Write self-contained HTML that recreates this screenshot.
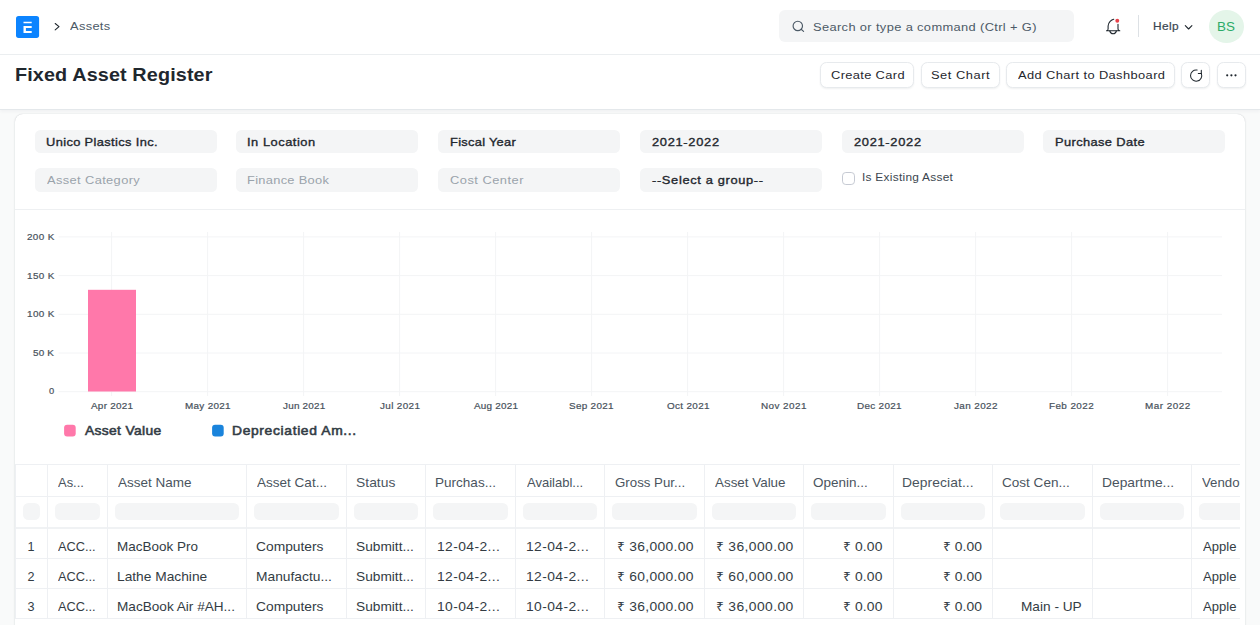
<!DOCTYPE html>
<html lang="en">
<head>
<meta charset="utf-8">
<title>Fixed Asset Register</title>
<style>
*{box-sizing:border-box;margin:0;padding:0}
html,body{width:1260px;height:625px;overflow:hidden}
body{background:#f9fafa;font-family:"Liberation Sans", sans-serif;color:#1f272e;position:relative}
.b{position:absolute;display:block}
.t{position:absolute;white-space:pre;line-height:1;display:block;transform-origin:0 0}
#nav{left:0;top:0;width:1260px;height:54.5px;background:#fff;border-bottom:1px solid #ebeef0}
#head{left:0;top:54.5px;width:1260px;height:55.5px;background:#fff;border-bottom:1px solid #e4e8eb;box-shadow:0 2px 3px rgba(25,39,52,.035)}
#search{left:779px;top:10.2px;width:295px;height:32.2px;background:#f4f5f6;border-radius:6px}
#avatar{left:1209px;top:10px;width:35px;height:32.6px;border-radius:50%;background:#e4f5e9}
#vdiv{left:1138px;top:15px;width:1px;height:22px;background:#dde1e5}
.btn{top:62.2px;height:26.2px;background:#fff;border:1px solid #e7eaed;border-radius:6.5px;box-shadow:0 1px 2px rgba(25,39,52,.07)}
#card{left:15px;top:114px;width:1230px;height:540px;background:#fff;border-radius:8px;box-shadow:0 0 1px rgba(25,39,52,.25),0 1px 3px rgba(25,39,52,.08)}
#fsep{left:15px;top:209px;width:1230px;height:1px;background:#eef0f2}
</style>
</head>
<body>
<nav>
<div id="nav" class="b"></div>
<div id="search" class="b"></div>
<div id="vdiv" class="b"></div>
<div id="avatar" class="b"></div>
<svg class="b" style="left:0;top:0" width="1260" height="55" viewBox="0 0 1260 55" fill="none" stroke-linecap="round" stroke-linejoin="round">
<rect x="16" y="16.100" width="23.100" height="21.800" rx="2.600" fill="#0c84ff"/>
<path d="M23.500 21.800h8.200v1.500h-8.200z M23.500 26h8.200v1.900h-5.800v3.100h5.800v1.900h-8.200z" fill="#fff"/>
<path d="M55.2 23.5L59 26.7 55.2 29.9" stroke="#1f272e" stroke-width="1.1"/>
<circle cx="797.8" cy="25.9" r="4.7" stroke="#4c5a67" stroke-width="1.15"/>
<path d="M801.4 29.5l2.2 1.9" stroke="#4c5a67" stroke-width="1.15"/>
<path d="M1113.7 19.2C1111.4 19.7 1108.3 22.3 1108.1 26V29C1108 30 1107.3 30.7 1106.5 30.7H1119.8C1118.8 30.7 1118 30 1118 29V24.3" stroke="#1f272e" stroke-width="1.1"/>
<path d="M1109.8 31C1110.2 32.6 1111.5 33.7 1113.1 33.7S1116 32.6 1116.4 31" stroke="#1f272e" stroke-width="1.1"/>
<circle cx="1117.3" cy="20.8" r="1.95" fill="#e8424a"/>
<path d="M1185.3 25.7L1188.6 29 1191.9 25.7" stroke="#1f272e" stroke-width="1.1"/>
</svg>
<span class="t" style="left:69.8px;top:19.5px;font-size:11.7px;color:#4c5a67;letter-spacing:0.29px;transform:scaleX(1.100);">Assets</span>
<span class="t" style="left:813.1px;top:20.6px;font-size:11.7px;color:#4c5a67;letter-spacing:0.33px;transform:scaleX(1.100);">Search or type a command (Ctrl + G)</span>
<span class="t" style="left:1152.6px;top:20.6px;font-size:10.8px;color:#3b4650;-webkit-text-stroke:0.2px #3b4650;letter-spacing:0.38px;transform:scaleX(1.100);">Help</span>
<span class="t" style="left:1217.1px;top:20.9px;font-size:12.6px;color:#2cab68;transform:scaleX(1.063);">BS</span>
</nav>
<header>
<div id="head" class="b"></div>
<div class="b btn" style="left:820.4px;width:93.6px"></div>
<div class="b btn" style="left:921px;width:79px"></div>
<div class="b btn" style="left:1006.4px;width:168.3px"></div>
<div class="b btn" style="left:1181.4px;width:28.8px"></div>
<div class="b btn" style="left:1217.4px;width:28.2px"></div>
<svg class="b" style="left:0;top:55px" width="1260" height="55" viewBox="0 55 1260 55" fill="none" stroke-linecap="round" stroke-linejoin="round">
<path d="M1197.1 70.05A5.6 5.6 0 1 0 1201.3 73.4" stroke="#1f272e" stroke-width="1.05"/>
<path d="M1201.3 70.3V73.4H1198.3" stroke="#1f272e" stroke-width="1.05"/>
<circle cx="1227.2" cy="75.3" r="1.1" fill="#1f272e"/><circle cx="1231.4" cy="75.3" r="1.1" fill="#1f272e"/><circle cx="1235.5" cy="75.3" r="1.1" fill="#1f272e"/>
</svg>
<span class="t" style="left:14.7px;top:65.6px;font-size:18px;color:#1f272e;font-weight:bold;letter-spacing:0.11px;transform:scaleX(1.100);">Fixed Asset Register</span>
<span class="t" style="left:830.5px;top:68.6px;font-size:11.7px;color:#1f272e;letter-spacing:0.32px;transform:scaleX(1.100);">Create Card</span>
<span class="t" style="left:931.1px;top:68.6px;font-size:11.7px;color:#1f272e;letter-spacing:0.49px;transform:scaleX(1.100);">Set Chart</span>
<span class="t" style="left:1017.5px;top:68.6px;font-size:11.7px;color:#1f272e;letter-spacing:0.36px;transform:scaleX(1.100);">Add Chart to Dashboard</span>
</header>
<main>
<div id="card" class="b"></div>
<section id="filters">
<div class="b" style="left:34.6px;top:130px;width:182px;height:23.4px;background:#f4f5f6;border-radius:5.5px;"></div>
<div class="b" style="left:34.6px;top:168.2px;width:182px;height:23.4px;background:#f4f5f6;border-radius:5.5px;"></div>
<div class="b" style="left:236.3px;top:130px;width:182px;height:23.4px;background:#f4f5f6;border-radius:5.5px;"></div>
<div class="b" style="left:236.3px;top:168.2px;width:182px;height:23.4px;background:#f4f5f6;border-radius:5.5px;"></div>
<div class="b" style="left:438.1px;top:130px;width:182px;height:23.4px;background:#f4f5f6;border-radius:5.5px;"></div>
<div class="b" style="left:438.1px;top:168.2px;width:182px;height:23.4px;background:#f4f5f6;border-radius:5.5px;"></div>
<div class="b" style="left:639.9px;top:130px;width:182px;height:23.4px;background:#f4f5f6;border-radius:5.5px;"></div>
<div class="b" style="left:639.9px;top:168.2px;width:182px;height:23.4px;background:#f4f5f6;border-radius:5.5px;"></div>
<div class="b" style="left:841.6px;top:130px;width:182px;height:23.4px;background:#f4f5f6;border-radius:5.5px;"></div>
<div class="b" style="left:1043.3px;top:130px;width:182px;height:23.4px;background:#f4f5f6;border-radius:5.5px;"></div>
<div class="b" style="left:841.8px;top:171.5px;width:13.3px;height:13px;background:#fff;border:1.3px solid #c6cad3;border-radius:3.8px;"></div>
<span class="t" style="left:46.0px;top:135.7px;font-size:11.7px;color:#1f272e;-webkit-text-stroke:0.35px #1f272e;letter-spacing:0.33px;transform:scaleX(1.100);">Unico Plastics Inc.</span>
<span class="t" style="left:247.1px;top:135.7px;font-size:11.7px;color:#1f272e;-webkit-text-stroke:0.35px #1f272e;letter-spacing:0.48px;transform:scaleX(1.100);">In Location</span>
<span class="t" style="left:449.8px;top:135.7px;font-size:11.7px;color:#1f272e;-webkit-text-stroke:0.35px #1f272e;letter-spacing:0.26px;transform:scaleX(1.100);">Fiscal Year</span>
<span class="t" style="left:652.0px;top:135.7px;font-size:11.7px;color:#1f272e;-webkit-text-stroke:0.35px #1f272e;letter-spacing:0.63px;transform:scaleX(1.100);">2021-2022</span>
<span class="t" style="left:853.5px;top:135.7px;font-size:11.7px;color:#1f272e;-webkit-text-stroke:0.35px #1f272e;letter-spacing:0.63px;transform:scaleX(1.100);">2021-2022</span>
<span class="t" style="left:1054.5px;top:135.7px;font-size:11.7px;color:#1f272e;-webkit-text-stroke:0.35px #1f272e;letter-spacing:0.34px;transform:scaleX(1.100);">Purchase Date</span>
<span class="t" style="left:46.8px;top:174.1px;font-size:11.7px;color:#9aa3ab;letter-spacing:0.34px;transform:scaleX(1.100);">Asset Category</span>
<span class="t" style="left:247.1px;top:174.1px;font-size:11.7px;color:#9aa3ab;letter-spacing:0.27px;transform:scaleX(1.100);">Finance Book</span>
<span class="t" style="left:449.8px;top:174.1px;font-size:11.7px;color:#9aa3ab;letter-spacing:0.44px;transform:scaleX(1.100);">Cost Center</span>
<span class="t" style="left:652.0px;top:174.1px;font-size:11.7px;color:#1f272e;-webkit-text-stroke:0.35px #1f272e;letter-spacing:0.59px;transform:scaleX(1.100);">--Select a group--</span>
<span class="t" style="left:861.6px;top:172.2px;font-size:10.8px;color:#3b4650;letter-spacing:0.25px;transform:scaleX(1.100);">Is Existing Asset</span>
<div id="fsep" class="b"></div>
</section>
<section id="chart">
<svg class="b" style="left:0;top:0" width="1260" height="625" viewBox="0 0 1260 625"><line x1="111.6" y1="232" x2="111.6" y2="396" stroke="#f3f4f6" stroke-width="1"/><line x1="207.6" y1="232" x2="207.6" y2="396" stroke="#f3f4f6" stroke-width="1"/><line x1="303.6" y1="232" x2="303.6" y2="396" stroke="#f3f4f6" stroke-width="1"/><line x1="399.6" y1="232" x2="399.6" y2="396" stroke="#f3f4f6" stroke-width="1"/><line x1="495.6" y1="232" x2="495.6" y2="396" stroke="#f3f4f6" stroke-width="1"/><line x1="591.6" y1="232" x2="591.6" y2="396" stroke="#f3f4f6" stroke-width="1"/><line x1="687.6" y1="232" x2="687.6" y2="396" stroke="#f3f4f6" stroke-width="1"/><line x1="783.6" y1="232" x2="783.6" y2="396" stroke="#f3f4f6" stroke-width="1"/><line x1="879.6" y1="232" x2="879.6" y2="396" stroke="#f3f4f6" stroke-width="1"/><line x1="975.6" y1="232" x2="975.6" y2="396" stroke="#f3f4f6" stroke-width="1"/><line x1="1071.6" y1="232" x2="1071.6" y2="396" stroke="#f3f4f6" stroke-width="1"/><line x1="1167.6" y1="232" x2="1167.6" y2="396" stroke="#f3f4f6" stroke-width="1"/><line x1="58.5" y1="236.9" x2="1222" y2="236.9" stroke="#f3f4f6" stroke-width="1"/><line x1="58.5" y1="275.6" x2="1222" y2="275.6" stroke="#f3f4f6" stroke-width="1"/><line x1="58.5" y1="314.3" x2="1222" y2="314.3" stroke="#f3f4f6" stroke-width="1"/><line x1="58.5" y1="353.0" x2="1222" y2="353.0" stroke="#f3f4f6" stroke-width="1"/><line x1="58.5" y1="391.7" x2="1222" y2="391.7" stroke="#f3f4f6" stroke-width="1"/><rect x="88" y="289.800" width="48" height="101.700" fill="#ff78aa"/><rect x="64.1" y="424.8" width="11.6" height="11.6" rx="3" fill="#ff78aa"/><rect x="212.1" y="424.8" width="11.6" height="11.6" rx="3" fill="#1a84dc"/></svg>
<span class="t" style="left:26.5px;top:232.7px;font-size:9px;color:#48525c;-webkit-text-stroke:0.2px #48525c;letter-spacing:0.32px;transform:scaleX(1.100);">200 K</span>
<span class="t" style="left:26.8px;top:272.1px;font-size:9px;color:#48525c;-webkit-text-stroke:0.2px #48525c;letter-spacing:0.35px;transform:scaleX(1.100);">150 K</span>
<span class="t" style="left:26.8px;top:310.2px;font-size:9px;color:#48525c;-webkit-text-stroke:0.2px #48525c;letter-spacing:0.35px;transform:scaleX(1.100);">100 K</span>
<span class="t" style="left:32.9px;top:348.9px;font-size:9px;color:#48525c;-webkit-text-stroke:0.2px #48525c;letter-spacing:0.16px;transform:scaleX(1.100);">50 K</span>
<span class="t" style="left:48.6px;top:387.1px;font-size:9px;color:#48525c;-webkit-text-stroke:0.2px #48525c;transform:scaleX(1.037);">0</span>
<span class="t" style="left:90.7px;top:402.2px;font-size:9px;color:#48525c;-webkit-text-stroke:0.2px #48525c;letter-spacing:0.24px;transform:scaleX(1.100);">Apr 2021</span>
<span class="t" style="left:185.1px;top:402.2px;font-size:9px;color:#48525c;-webkit-text-stroke:0.2px #48525c;letter-spacing:0.27px;transform:scaleX(1.100);">May 2021</span>
<span class="t" style="left:282.6px;top:402.2px;font-size:9px;color:#48525c;-webkit-text-stroke:0.2px #48525c;letter-spacing:0.20px;transform:scaleX(1.100);">Jun 2021</span>
<span class="t" style="left:379.7px;top:402.2px;font-size:9px;color:#48525c;-webkit-text-stroke:0.2px #48525c;letter-spacing:0.33px;transform:scaleX(1.100);">Jul 2021</span>
<span class="t" style="left:473.7px;top:402.2px;font-size:9px;color:#48525c;-webkit-text-stroke:0.2px #48525c;letter-spacing:0.21px;transform:scaleX(1.100);">Aug 2021</span>
<span class="t" style="left:569.2px;top:402.2px;font-size:9px;color:#48525c;-webkit-text-stroke:0.2px #48525c;letter-spacing:0.28px;transform:scaleX(1.100);">Sep 2021</span>
<span class="t" style="left:666.5px;top:402.2px;font-size:9px;color:#48525c;-webkit-text-stroke:0.2px #48525c;letter-spacing:0.30px;transform:scaleX(1.100);">Oct 2021</span>
<span class="t" style="left:760.6px;top:402.2px;font-size:9px;color:#48525c;-webkit-text-stroke:0.2px #48525c;letter-spacing:0.39px;transform:scaleX(1.100);">Nov 2021</span>
<span class="t" style="left:857.2px;top:402.2px;font-size:9px;color:#48525c;-webkit-text-stroke:0.2px #48525c;letter-spacing:0.28px;transform:scaleX(1.100);">Dec 2021</span>
<span class="t" style="left:954.0px;top:402.2px;font-size:9px;color:#48525c;-webkit-text-stroke:0.2px #48525c;letter-spacing:0.36px;transform:scaleX(1.100);">Jan 2022</span>
<span class="t" style="left:1048.8px;top:402.2px;font-size:9px;color:#48525c;-webkit-text-stroke:0.2px #48525c;letter-spacing:0.37px;transform:scaleX(1.100);">Feb 2022</span>
<span class="t" style="left:1144.6px;top:402.2px;font-size:9px;color:#48525c;-webkit-text-stroke:0.2px #48525c;letter-spacing:0.46px;transform:scaleX(1.100);">Mar 2022</span>
<span class="t" style="left:85.2px;top:424.8px;font-size:12.6px;color:#333c45;-webkit-text-stroke:0.55px #333c45;letter-spacing:0.30px;transform:scaleX(1.100);">Asset Value</span>
<span class="t" style="left:231.7px;top:424.8px;font-size:12.6px;color:#333c45;-webkit-text-stroke:0.55px #333c45;letter-spacing:0.59px;transform:scaleX(1.100);">Depreciatied Am...</span>
</section>
<section id="datatable">
<div class="b" style="left:15px;top:464px;width:1225px;height:1px;background:#eef0f3"></div>
<div class="b" style="left:15px;top:496px;width:1225px;height:1px;background:#eef0f3"></div>
<div class="b" style="left:15px;top:527px;width:1225px;height:2px;background:#f0f2f4"></div>
<div class="b" style="left:15px;top:558px;width:1225px;height:1px;background:#eef0f3"></div>
<div class="b" style="left:15px;top:588px;width:1225px;height:1px;background:#eef0f3"></div>
<div class="b" style="left:15px;top:618px;width:1225px;height:1px;background:#eef0f3"></div>
<div class="b" style="left:15px;top:464px;width:1px;height:155px;background:#eef0f3"></div>
<div class="b" style="left:47.1px;top:464px;width:1px;height:155px;background:#eef0f3"></div>
<div class="b" style="left:106.9px;top:464px;width:1px;height:155px;background:#eef0f3"></div>
<div class="b" style="left:245.8px;top:464px;width:1px;height:155px;background:#eef0f3"></div>
<div class="b" style="left:345.7px;top:464px;width:1px;height:155px;background:#eef0f3"></div>
<div class="b" style="left:424.8px;top:464px;width:1px;height:155px;background:#eef0f3"></div>
<div class="b" style="left:515.1px;top:464px;width:1px;height:155px;background:#eef0f3"></div>
<div class="b" style="left:604.4px;top:464px;width:1px;height:155px;background:#eef0f3"></div>
<div class="b" style="left:703.8px;top:464px;width:1px;height:155px;background:#eef0f3"></div>
<div class="b" style="left:803.0px;top:464px;width:1px;height:155px;background:#eef0f3"></div>
<div class="b" style="left:892.9px;top:464px;width:1px;height:155px;background:#eef0f3"></div>
<div class="b" style="left:992.0px;top:464px;width:1px;height:155px;background:#eef0f3"></div>
<div class="b" style="left:1091.8px;top:464px;width:1px;height:155px;background:#eef0f3"></div>
<div class="b" style="left:1191.2px;top:464px;width:1px;height:155px;background:#eef0f3"></div>
<div class="b" style="left:22.9px;top:503.2px;width:17.2px;height:16.4px;background:#f4f5f6;border-radius:5.5px"></div>
<div class="b" style="left:55.1px;top:503.2px;width:44.8px;height:16.4px;background:#f4f5f6;border-radius:5.5px"></div>
<div class="b" style="left:114.9px;top:503.2px;width:123.9px;height:16.4px;background:#f4f5f6;border-radius:5.5px"></div>
<div class="b" style="left:253.8px;top:503.2px;width:84.9px;height:16.4px;background:#f4f5f6;border-radius:5.5px"></div>
<div class="b" style="left:353.7px;top:503.2px;width:64.1px;height:16.4px;background:#f4f5f6;border-radius:5.5px"></div>
<div class="b" style="left:432.8px;top:503.2px;width:75.3px;height:16.4px;background:#f4f5f6;border-radius:5.5px"></div>
<div class="b" style="left:523.1px;top:503.2px;width:74.3px;height:16.4px;background:#f4f5f6;border-radius:5.5px"></div>
<div class="b" style="left:612.4px;top:503.2px;width:84.4px;height:16.4px;background:#f4f5f6;border-radius:5.5px"></div>
<div class="b" style="left:711.8px;top:503.2px;width:84.2px;height:16.4px;background:#f4f5f6;border-radius:5.5px"></div>
<div class="b" style="left:811.0px;top:503.2px;width:74.9px;height:16.4px;background:#f4f5f6;border-radius:5.5px"></div>
<div class="b" style="left:900.9px;top:503.2px;width:84.1px;height:16.4px;background:#f4f5f6;border-radius:5.5px"></div>
<div class="b" style="left:1000.0px;top:503.2px;width:84.8px;height:16.4px;background:#f4f5f6;border-radius:5.5px"></div>
<div class="b" style="left:1099.8px;top:503.2px;width:84.4px;height:16.4px;background:#f4f5f6;border-radius:5.5px"></div>
<div class="b" style="left:1199.2px;top:503.2px;width:40.8px;height:16.4px;background:#f4f5f6;border-radius:5.5px 0 0 5.5px"></div>
<span class="t" style="left:58.3px;top:476.8px;font-size:12.6px;color:#4a545e;transform:scaleX(1.029);">As...</span>
<span class="t" style="left:118.2px;top:476.8px;font-size:12.6px;color:#4a545e;transform:scaleX(1.071);">Asset Name</span>
<span class="t" style="left:257.4px;top:476.8px;font-size:12.6px;color:#4a545e;transform:scaleX(1.074);">Asset Cat...</span>
<span class="t" style="left:355.6px;top:476.8px;font-size:12.6px;color:#4a545e;letter-spacing:0.02px;transform:scaleX(1.100);">Status</span>
<span class="t" style="left:435.1px;top:476.8px;font-size:12.6px;color:#4a545e;transform:scaleX(1.075);">Purchas...</span>
<span class="t" style="left:526.5px;top:476.8px;font-size:12.6px;color:#4a545e;transform:scaleX(1.033);">Availabl...</span>
<span class="t" style="left:614.7px;top:476.8px;font-size:12.6px;color:#4a545e;transform:scaleX(1.054);">Gross Pur...</span>
<span class="t" style="left:715.2px;top:476.8px;font-size:12.6px;color:#4a545e;transform:scaleX(1.064);">Asset Value</span>
<span class="t" style="left:813.1px;top:476.8px;font-size:12.6px;color:#4a545e;transform:scaleX(1.070);">Openin...</span>
<span class="t" style="left:902.1px;top:476.8px;font-size:12.6px;color:#4a545e;letter-spacing:0.06px;transform:scaleX(1.100);">Depreciat...</span>
<span class="t" style="left:1002.4px;top:476.8px;font-size:12.6px;color:#4a545e;transform:scaleX(1.075);">Cost Cen...</span>
<span class="t" style="left:1101.6px;top:476.8px;font-size:12.6px;color:#4a545e;transform:scaleX(1.096);">Departme...</span>
<span class="t" style="left:1202.0px;top:476.8px;font-size:12.6px;color:#4a545e;transform:scaleX(1.052);">Vendor</span>
<span class="t" style="left:27.5px;top:540.9px;font-size:12.6px;color:#333c44;">1</span>
<span class="t" style="left:58.1px;top:540.9px;font-size:12.6px;color:#333c44;transform:scaleX(1.015);">ACC...</span>
<span class="t" style="left:117.3px;top:540.9px;font-size:12.6px;color:#333c44;transform:scaleX(1.070);">MacBook Pro</span>
<span class="t" style="left:255.9px;top:540.9px;font-size:12.6px;color:#333c44;transform:scaleX(1.096);">Computers</span>
<span class="t" style="left:355.8px;top:540.9px;font-size:12.6px;color:#333c44;transform:scaleX(1.088);">Submitt...</span>
<span class="t" style="left:436.8px;top:540.9px;font-size:12.6px;color:#333c44;letter-spacing:0.36px;transform:scaleX(1.100);">12-04-2...</span>
<span class="t" style="left:526.3px;top:540.9px;font-size:12.6px;color:#333c44;letter-spacing:0.36px;transform:scaleX(1.100);">12-04-2...</span>
<span class="t" style="left:616.6px;top:540.9px;font-size:12.6px;color:#333c44;letter-spacing:0.29px;transform:scaleX(1.100);">₹ 36,000.00</span>
<span class="t" style="left:716.4px;top:540.9px;font-size:12.6px;color:#333c44;letter-spacing:0.37px;transform:scaleX(1.100);">₹ 36,000.00</span>
<span class="t" style="left:843.4px;top:540.9px;font-size:12.6px;color:#333c44;letter-spacing:0.15px;transform:scaleX(1.100);">₹ 0.00</span>
<span class="t" style="left:942.8px;top:540.9px;font-size:12.6px;color:#333c44;letter-spacing:0.07px;transform:scaleX(1.100);">₹ 0.00</span>
<span class="t" style="left:1202.6px;top:540.9px;font-size:12.6px;color:#333c44;transform:scaleX(1.037);">Apple</span>
<span class="t" style="left:27.5px;top:570.5px;font-size:12.6px;color:#333c44;">2</span>
<span class="t" style="left:58.1px;top:570.5px;font-size:12.6px;color:#333c44;transform:scaleX(1.015);">ACC...</span>
<span class="t" style="left:117.4px;top:570.5px;font-size:12.6px;color:#333c44;transform:scaleX(1.092);">Lathe Machine</span>
<span class="t" style="left:256.1px;top:570.5px;font-size:12.6px;color:#333c44;transform:scaleX(1.096);">Manufactu...</span>
<span class="t" style="left:355.8px;top:570.5px;font-size:12.6px;color:#333c44;transform:scaleX(1.088);">Submitt...</span>
<span class="t" style="left:436.8px;top:570.5px;font-size:12.6px;color:#333c44;letter-spacing:0.36px;transform:scaleX(1.100);">12-04-2...</span>
<span class="t" style="left:526.3px;top:570.5px;font-size:12.6px;color:#333c44;letter-spacing:0.36px;transform:scaleX(1.100);">12-04-2...</span>
<span class="t" style="left:616.6px;top:570.5px;font-size:12.6px;color:#333c44;letter-spacing:0.29px;transform:scaleX(1.100);">₹ 60,000.00</span>
<span class="t" style="left:716.4px;top:570.5px;font-size:12.6px;color:#333c44;letter-spacing:0.37px;transform:scaleX(1.100);">₹ 60,000.00</span>
<span class="t" style="left:843.4px;top:570.5px;font-size:12.6px;color:#333c44;letter-spacing:0.15px;transform:scaleX(1.100);">₹ 0.00</span>
<span class="t" style="left:942.8px;top:570.5px;font-size:12.6px;color:#333c44;letter-spacing:0.07px;transform:scaleX(1.100);">₹ 0.00</span>
<span class="t" style="left:1202.6px;top:570.5px;font-size:12.6px;color:#333c44;transform:scaleX(1.037);">Apple</span>
<span class="t" style="left:27.5px;top:600.9px;font-size:12.6px;color:#333c44;">3</span>
<span class="t" style="left:58.1px;top:600.9px;font-size:12.6px;color:#333c44;transform:scaleX(1.015);">ACC...</span>
<span class="t" style="left:117.3px;top:600.9px;font-size:12.6px;color:#333c44;transform:scaleX(1.080);">MacBook Air #AH...</span>
<span class="t" style="left:255.9px;top:600.9px;font-size:12.6px;color:#333c44;transform:scaleX(1.096);">Computers</span>
<span class="t" style="left:355.8px;top:600.9px;font-size:12.6px;color:#333c44;transform:scaleX(1.088);">Submitt...</span>
<span class="t" style="left:436.8px;top:600.9px;font-size:12.6px;color:#333c44;letter-spacing:0.36px;transform:scaleX(1.100);">10-04-2...</span>
<span class="t" style="left:526.3px;top:600.9px;font-size:12.6px;color:#333c44;letter-spacing:0.36px;transform:scaleX(1.100);">10-04-2...</span>
<span class="t" style="left:616.6px;top:600.9px;font-size:12.6px;color:#333c44;letter-spacing:0.29px;transform:scaleX(1.100);">₹ 36,000.00</span>
<span class="t" style="left:716.4px;top:600.9px;font-size:12.6px;color:#333c44;letter-spacing:0.37px;transform:scaleX(1.100);">₹ 36,000.00</span>
<span class="t" style="left:843.4px;top:600.9px;font-size:12.6px;color:#333c44;letter-spacing:0.15px;transform:scaleX(1.100);">₹ 0.00</span>
<span class="t" style="left:942.8px;top:600.9px;font-size:12.6px;color:#333c44;letter-spacing:0.07px;transform:scaleX(1.100);">₹ 0.00</span>
<span class="t" style="left:1021.1px;top:600.9px;font-size:12.6px;color:#333c44;transform:scaleX(1.084);">Main - UP</span>
<span class="t" style="left:1202.6px;top:600.9px;font-size:12.6px;color:#333c44;transform:scaleX(1.037);">Apple</span>
<div class="b" style="left:1240.2px;top:455px;width:4.8px;height:170px;background:#fff"></div>
</section>
</main>
</body>
</html>
